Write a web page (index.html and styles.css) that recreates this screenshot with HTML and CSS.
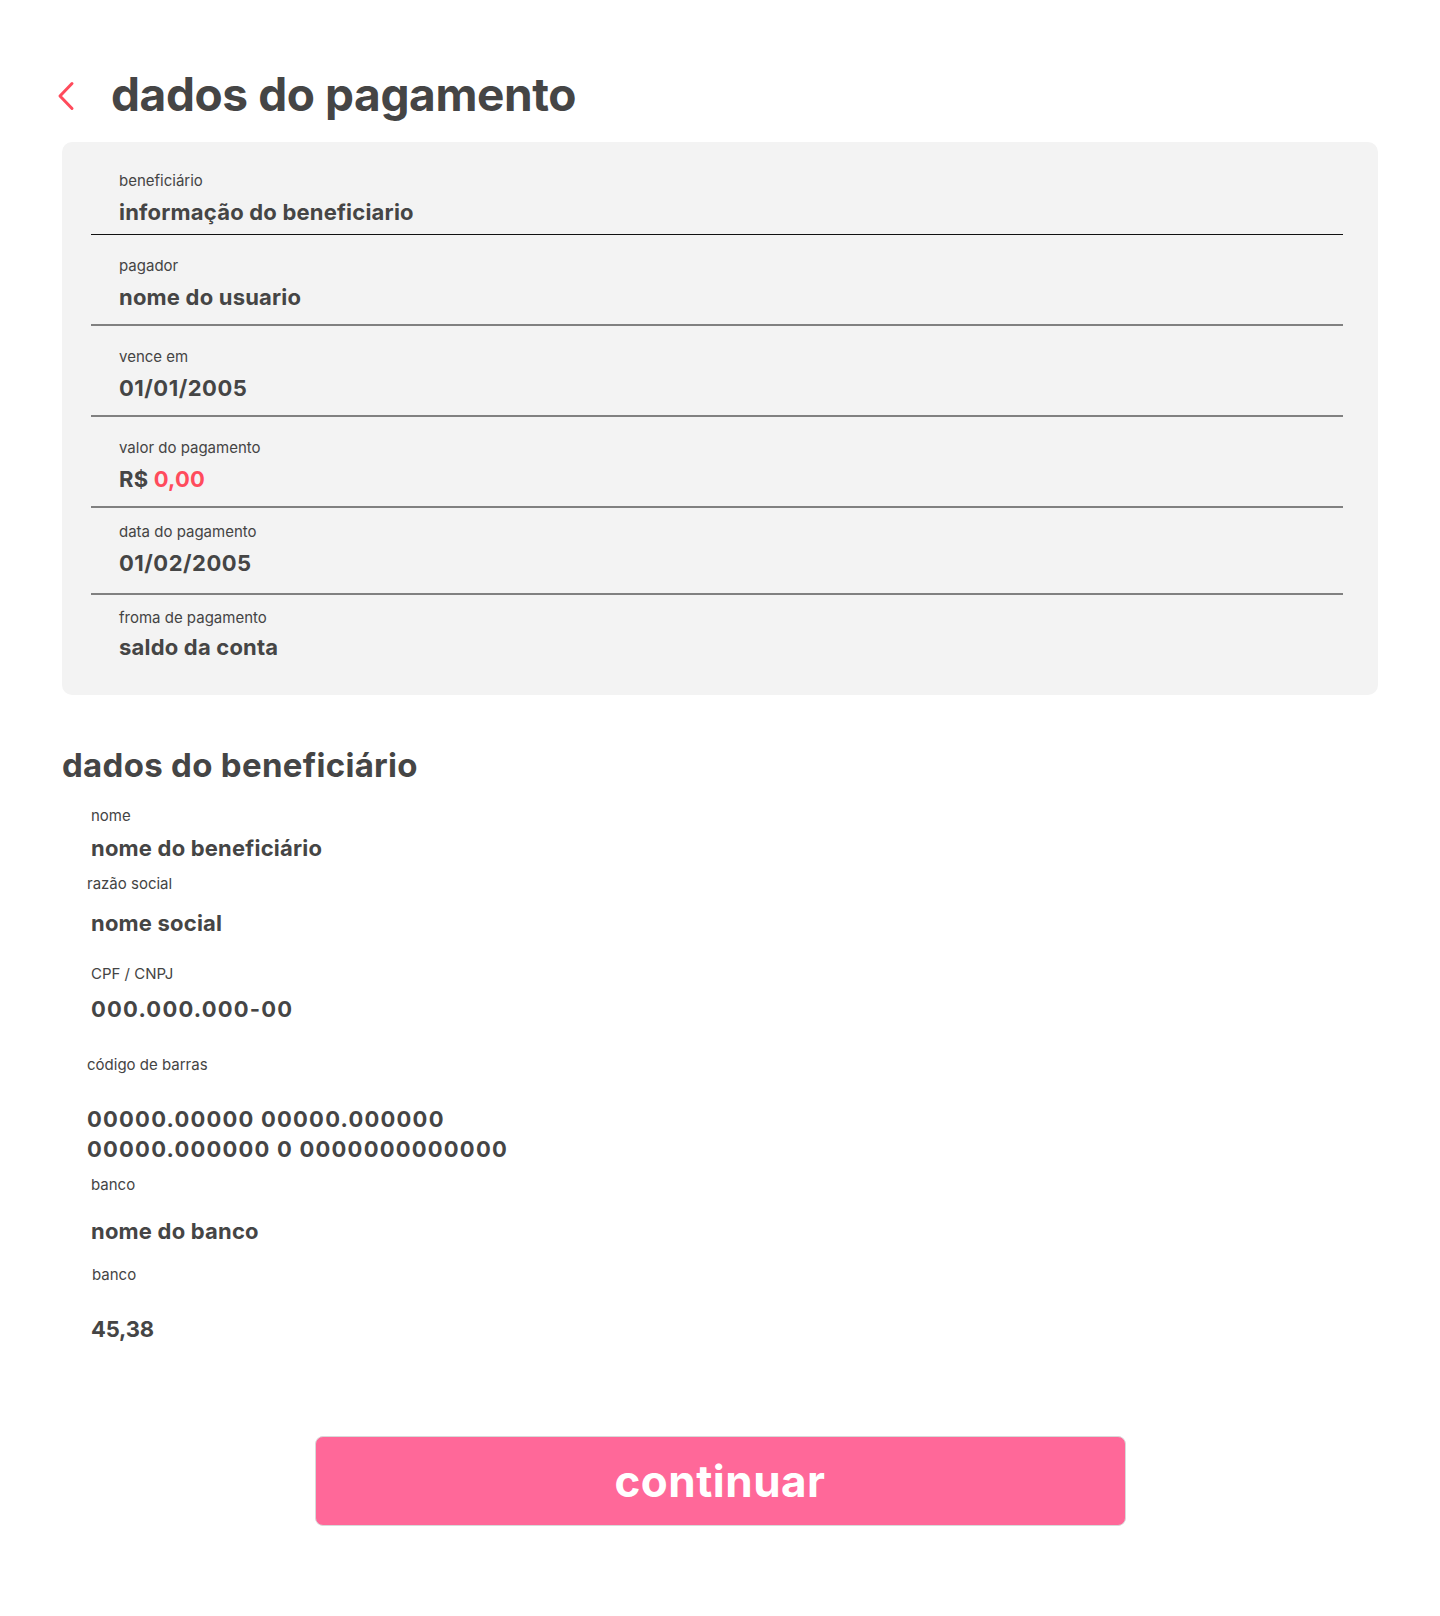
FILE: index.html
```html
<!DOCTYPE html>
<html lang="pt-BR">
<head>
<meta charset="utf-8">
<title>dados do pagamento</title>
<link rel="stylesheet" href="styles.css">
</head>
<body>
<main class="page">
  <header class="header">
    <button class="back" aria-label="voltar">
      <svg width="18" height="30" viewBox="0 0 18 30" fill="none"><path d="M15 2.5 L3 15 L15 27.5" stroke="#FF4B5C" stroke-width="3" stroke-linecap="round" stroke-linejoin="round"/></svg>
    </button>
    <h1 class="title">dados do pagamento</h1>
  </header>

  <section class="card">
    <div class="row row--first">
      <span class="label">beneficiário</span>
      <span class="value">informação do beneficiario</span>
    </div>
    <div class="row">
      <span class="label">pagador</span>
      <span class="value">nome do usuario</span>
    </div>
    <div class="row">
      <span class="label">vence em</span>
      <span class="value num">01/01/2005</span>
    </div>
    <div class="row">
      <span class="label">valor do pagamento</span>
      <span class="value">R$ <span class="accent">0,00</span></span>
    </div>
    <div class="row row--tight">
      <span class="label">data do pagamento</span>
      <span class="value num">01/02/2005</span>
    </div>
    <div class="row row--last">
      <span class="label">froma de pagamento</span>
      <span class="value">saldo da conta</span>
    </div>
  </section>

  <section class="details">
    <h2 class="subtitle">dados do beneficiário</h2>
    <span class="label d-nome">nome</span>
    <span class="value d-nome-v">nome do beneficiário</span>
    <span class="label shift d-razao">razão social</span>
    <span class="value d-razao-v">nome social</span>
    <span class="label d-cpf">CPF / CNPJ</span>
    <span class="value num-wide d-cpf-v">000.000.000-00</span>
    <span class="label shift d-cod">código de barras</span>
    <span class="value num-wide barcode shift">00000.00000 00000.000000<br>00000.000000 0 0000000000000</span>
    <span class="label d-banco">banco</span>
    <span class="value d-banco-v">nome do banco</span>
    <span class="label d-banco2">banco</span>
    <span class="value d-banco2-v">45,38</span>
  </section>

  <div class="actions">
    <button class="continue">continuar</button>
  </div>
</main>
</body>
</html>
```

FILE: styles.css
```css
* { box-sizing: border-box; }

body {
  margin: 0;
  background: #ffffff;
  font-family: "Inter", "Noto Sans", sans-serif;
  color: #454545;
}

.page {
  width: 1440px;
  padding-bottom: 90px;
}

.header {
  display: flex;
  align-items: center;
  height: 70px;
  margin-top: 59px;
  padding-left: 57px;
}

.back {
  border: 0;
  background: none;
  padding: 0;
  width: 18px;
  height: 30px;
  display: flex;
  align-items: center;
  justify-content: center;
  margin-top: 4px;
  margin-right: 36px;
}

.title {
  margin: 0;
  font-size: 46px;
  font-weight: 700;
  line-height: 70px;
  color: #454545;
  letter-spacing: -0.4px;
}

.card {
  margin: 13px 0 0 62px;
  width: 1316px;
  background: #f3f3f3;
  border-radius: 10px;
  padding: 30px 35px 0 29px;
}

.row {
  display: flex;
  flex-direction: column;
  gap: 8px;
  padding: 22px 0 13px 28px;
  border-bottom: 2px solid #808080;
}

.row--first {
  padding-top: 0;
  padding-bottom: 8px;
  border-bottom: 1px solid #111111;
}

.row--tight {
  padding-top: 15px;
  padding-bottom: 16px;
}

.row--last {
  padding-top: 14px;
  padding-bottom: 34px;
  gap: 6px;
  border-bottom: 0;
}

.label {
  display: block;
  font-size: 15px;
  line-height: 18px;
  font-weight: 400;
  color: #444444;
}

.value {
  display: block;
  font-size: 22px;
  line-height: 28px;
  font-weight: 700;
  color: #454545;
  letter-spacing: 0.2px;
}

.num { letter-spacing: 0.5px; }
.num-wide { letter-spacing: 1.2px; }

.accent { color: #FF4B5C; }

.details {
  display: flex;
  flex-direction: column;
  align-items: flex-start;
  padding-left: 91px;
}

.subtitle {
  margin: 50px 0 0 -29px;
  font-size: 33px;
  line-height: 40px;
  font-weight: 700;
  color: #454545;
  letter-spacing: 0.3px;
}

.shift { margin-left: -4px; }

.d-nome { margin-top: 22px; }
.d-nome-v { margin-top: 9px; }
.d-razao { margin-top: 13px; }
.d-razao-v { margin-top: 16px; }
.d-cpf { margin-top: 28px; }
.d-cpf-v { margin-top: 12px; }
.d-cod { margin-top: 33px; }
.barcode { margin-top: 30px; line-height: 30px; }
.d-banco { margin-top: 12px; }
.d-banco-v { margin-top: 23px; }
.d-banco2 { margin-top: 21px; margin-left: 1px; }
.d-banco2-v { margin-top: 31px; letter-spacing: -0.2px; }

.actions {
  display: flex;
  justify-content: center;
  margin-top: 93px;
}

.continue {
  width: 811px;
  height: 90px;
  background: #FF6899;
  border: 1px solid #d9d9d9;
  border-radius: 8px;
  color: #ffffff;
  font-family: "Inter", "Noto Sans", sans-serif;
  font-size: 44px;
  font-weight: 700;
  letter-spacing: 0.5px;
  padding: 0;
}
```
